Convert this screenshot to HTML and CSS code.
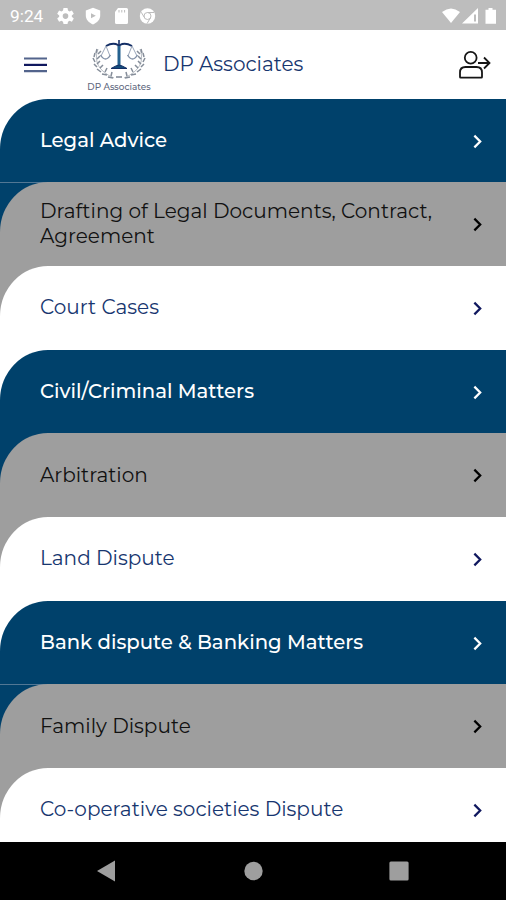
FILE: index.html
```html
<!DOCTYPE html>
<html lang="en">
  <head>
    <meta charset="UTF-8" />
    <meta name="viewport" content="width=device-width, initial-scale=1.0" />
    <title>DP Associates</title>
    <link rel="stylesheet" href="styles.css">
  </head>
  <body>
    <div class="status-bar">
      <span class="time">9:24</span>
      <svg class="status-left" width="100" height="18" viewBox="0 0 100 18" fill="#fff">
        <!-- settings -->
        <path fill-rule="evenodd" d="M6.5 1h4l.5 2.5 1.5.9 2.4-.9 1.9 3.3-2 1.6v1.400l2 1.600-1.900 3.300-2.400-.9-1.500.9-.5 2.400h-4L6 14.700l-1.500-.9-2.400.9L.2 11.400l2-1.600V8.400l-2-1.600 1.900-3.300 2.400.9L6 3.500zM8.500 6.300a2.800 2.800 0 1 0 0 5.600 2.800 2.800 0 0 0 0-5.600z" />
        <!-- play protect -->
        <path fill-rule="evenodd" d="M36 .8l7.200 2.800v5c0 4-3 7.300-7.200 8.800-4.200-1.500-7.200-4.800-7.200-8.800v-5zM34 6.300v5l4.800-2.500z" />
        <!-- sd card -->
        <path fill-rule="evenodd" d="M61 1h8.500q1.500 0 1.500 1.500v13q0 1.500-1.500 1.500h-10q-1.500 0-1.500-1.500V5zM61.500 3v2.500h1V3zm2.800 0v2.500h1V3zm2.800 0v2.500h1V3z" />
        <!-- chrome -->
        <circle cx="90.500" cy="9" r="7.700" />
        <g fill="none" stroke="#bdbdbd" stroke-width="1">
          <circle cx="90.500" cy="9" r="3.500" />
          <path d="M90.500 5.500h6.500M87.500 10.700l-3.300-5.500M93.500 10.700l-3.500 6" />
        </g>
      </svg>
      <svg class="status-right" width="56" height="18" viewBox="0 0 56 18" fill="#fff">
        <path d="M0 5q9-7 18 0L9 16z" />
        <path fill-rule="evenodd" d="M36 1v15.500H20zM32 7.500v7h2v-7z" />
        <path d="M46.500 1h4v1.800H54v13.900H43.500V2.800h3z" />
      </svg>
    </div>

    <header class="app-bar">
      <svg class="menu" width="23" height="18" viewBox="0 0 23 18">
        <path d="M0 2.500h23M0 15.200h23" stroke="#53648c" stroke-width="2.200" />
        <path d="M0 8.900h23" stroke="#10185f" stroke-width="2.200" />
      </svg>
      <div class="logo">
        <svg width="54" height="42" viewBox="0 0 54 42" fill="none">
          <g stroke="#142f66">
            <path d="M27 1v7" stroke-width="1.600" />
            <path d="M14 7q7-4 12-1l1 1 1-1q5-3 12 1" stroke-width="2" />
            <path d="M27 7v21" stroke="#24618f" stroke-width="3" />
            <path d="M19 29.500q6-3.500 8-3.500t8 3.500z" fill="#124c7b" stroke-width="1" />
          </g>
          <g stroke="#8291a8" stroke-width=".8">
            <path d="M14 7l-5 10M14 7l4 10M40 7l-4 10M40 7l5 10" />
            <path d="M8.500 16q5 8 10 0M35.500 16q5 8 10 0" stroke-width="1.300" />
          </g>
          <g id="laurel" stroke="#858d99" stroke-width="1.500">
            <path d="M6 10q-7 19 16 29" stroke-width=".6" />
            <path d="M5 10l-1 4M3 14l-1 4M1 19l2 4M2 25l3 3M5 30l4 3M10 35l5 1M16 38l5 1" />
            <path d="M9 12l-3 3M8 17l-3 3M8 22l-3 3M11 26l-3 3M15 29l-2 4M20 33l-1 4" />
          </g>
          <use href="#laurel" transform="translate(54 0) scale(-1 1)" />
          <path d="M24 38h6" stroke="#858d99" stroke-width="1.600" />
        </svg>
        <span class="logo-name">DP Associates</span>
      </div>
      <h1 class="title">DP Associates</h1>
      <svg class="logout" width="33" height="30" viewBox="0 0 33 30" fill="none" stroke="#161616" stroke-width="1.800">
        <circle cx="12.700" cy="7.800" r="5.900" />
        <path d="M2 27v-4.500q0-5.500 5.500-5.500h11q5.500 0 5.500 5.500V27q0 .7-.7.700H2.700Q2 27.700 2 27z" />
        <path d="M20 13h11M26 7.500l5.500 5.500-5.500 5.500" />
      </svg>
    </header>

    <main class="list">
      <div class="row blue on-white">
        <div class="card"><span class="label">Legal Advice</span><svg class="arrow" viewBox="0 0 10 16"><path d="M1.500 1.500L8 8l-6.500 6.500" /></svg></div>
      </div>
      <div class="row gray on-blue lined">
        <div class="card"><span class="label">Drafting of Legal Documents, Contract,<br />Agreement</span><svg class="arrow" viewBox="0 0 10 16"><path d="M1.500 1.500L8 8l-6.500 6.500" /></svg></div>
      </div>
      <div class="row white on-gray">
        <div class="card"><span class="label">Court Cases</span><svg class="arrow" viewBox="0 0 10 16"><path d="M1.500 1.500L8 8l-6.500 6.500" /></svg></div>
      </div>
      <div class="row blue on-white">
        <div class="card"><span class="label">Civil/Criminal Matters</span><svg class="arrow" viewBox="0 0 10 16"><path d="M1.500 1.500L8 8l-6.500 6.500" /></svg></div>
      </div>
      <div class="row gray on-blue">
        <div class="card"><span class="label">Arbitration</span><svg class="arrow" viewBox="0 0 10 16"><path d="M1.500 1.500L8 8l-6.500 6.500" /></svg></div>
      </div>
      <div class="row white on-gray">
        <div class="card"><span class="label">Land Dispute</span><svg class="arrow" viewBox="0 0 10 16"><path d="M1.500 1.500L8 8l-6.500 6.500" /></svg></div>
      </div>
      <div class="row blue on-white">
        <div class="card"><span class="label">Bank dispute &amp; Banking Matters</span><svg class="arrow" viewBox="0 0 10 16"><path d="M1.500 1.500L8 8l-6.500 6.500" /></svg></div>
      </div>
      <div class="row gray on-blue lined">
        <div class="card"><span class="label">Family Dispute</span><svg class="arrow" viewBox="0 0 10 16"><path d="M1.500 1.500L8 8l-6.500 6.500" /></svg></div>
      </div>
      <div class="row white on-gray">
        <div class="card"><span class="label">Co-operative societies Dispute</span><svg class="arrow" viewBox="0 0 10 16"><path d="M1.500 1.500L8 8l-6.500 6.500" /></svg></div>
      </div>
    </main>

    <nav class="nav-bar">
      <svg width="20" height="22" viewBox="0 0 20 22"><path d="M1 11L19 .5v21z" /></svg>
      <svg width="20" height="20" viewBox="0 0 20 20"><circle cx="10.500" cy="10" r="9.200" /></svg>
      <svg width="20" height="20" viewBox="0 0 20 20"><rect x=".4" y=".4" width="19.200" height="19.200" rx="1.500" /></svg>
    </nav>
  </body>
</html>
```
FILE: styles.css
```css
* {
  box-sizing: border-box;
}

body {
  margin: 0;
  height: 100vh;
  display: flex;
  flex-direction: column;
  overflow: hidden;
  background-color: #fff;
  font-family: Montserrat, Inter, sans-serif;
}

svg {
  display: block;
  flex: none;
}

/* Android status bar */
.status-bar {
  height: 30px;
  flex: none;
  display: flex;
  align-items: center;
  padding: 1px 8px 0 10px;
  background-color: #bdbdbd;
}

.time {
  width: 47px;
  color: #fff;
  font-family: Roboto, sans-serif;
  font-size: 17.3px;
}

.status-right {
  margin-left: auto;
}

/* App header */
.app-bar {
  height: 68.7px;
  flex: none;
  display: flex;
  align-items: center;
  padding: 1px 15px 0 24px;
  background-color: #fff;
}

.logo {
  width: 64px;
  height: 53px;
  margin: 1px 0 0 40px;
  display: flex;
  flex-direction: column;
  align-items: center;
}

.logo-name {
  color: #5d667c;
  font-size: 8.9px;
  font-weight: 500;
  line-height: 11px;
  white-space: nowrap;
}

.title {
  margin: 0 0 2px 12px;
  color: #17366f;
  font-size: 20px;
  font-weight: 400;
  line-height: 24px;
}

.logout {
  margin-left: auto;
}

/* Services */
.list {
  flex: 1;
  min-height: 0;
  overflow: hidden;
}

.row {
  height: 83.68px;
}

.card {
  height: 100%;
  display: flex;
  align-items: center;
  justify-content: space-between;
  padding: 0 24px 0 40px;
  border-top-left-radius: 48px 50px;
}

.label {
  font-size: 20.05px;
  line-height: 25px;
  white-space: nowrap;
}

.blue .card {
  background-color: #00416b;
  color: #fff;
}

.blue .label {
  font-size: 19.7px;
  font-weight: 500;
}

.gray .card {
  background-color: #9e9e9e;
  color: #111;
}

.white .card {
  background-color: #fff;
  color: #17366f;
}

.on-white {
  background-color: #fff;
}

.on-blue {
  background-color: #00416b;
}

.on-gray {
  background-color: #9e9e9e;
}

.lined {
  background-image: linear-gradient(#527794 1px, transparent 1px);
}

.arrow {
  width: 9px;
  height: 15px;
  margin-top: 1px;
  fill: none;
  stroke: #000;
  stroke-width: 2.5;
}

.blue .arrow {
  stroke: #fff;
}

.white .arrow {
  stroke: #10185f;
}

/* Android navigation */
.nav-bar {
  height: 58px;
  flex: none;
  display: flex;
  align-items: center;
  justify-content: space-between;
  padding: 0 97px 0 96px;
  background-color: #000;
  fill: #9e9e9e;
}
```
